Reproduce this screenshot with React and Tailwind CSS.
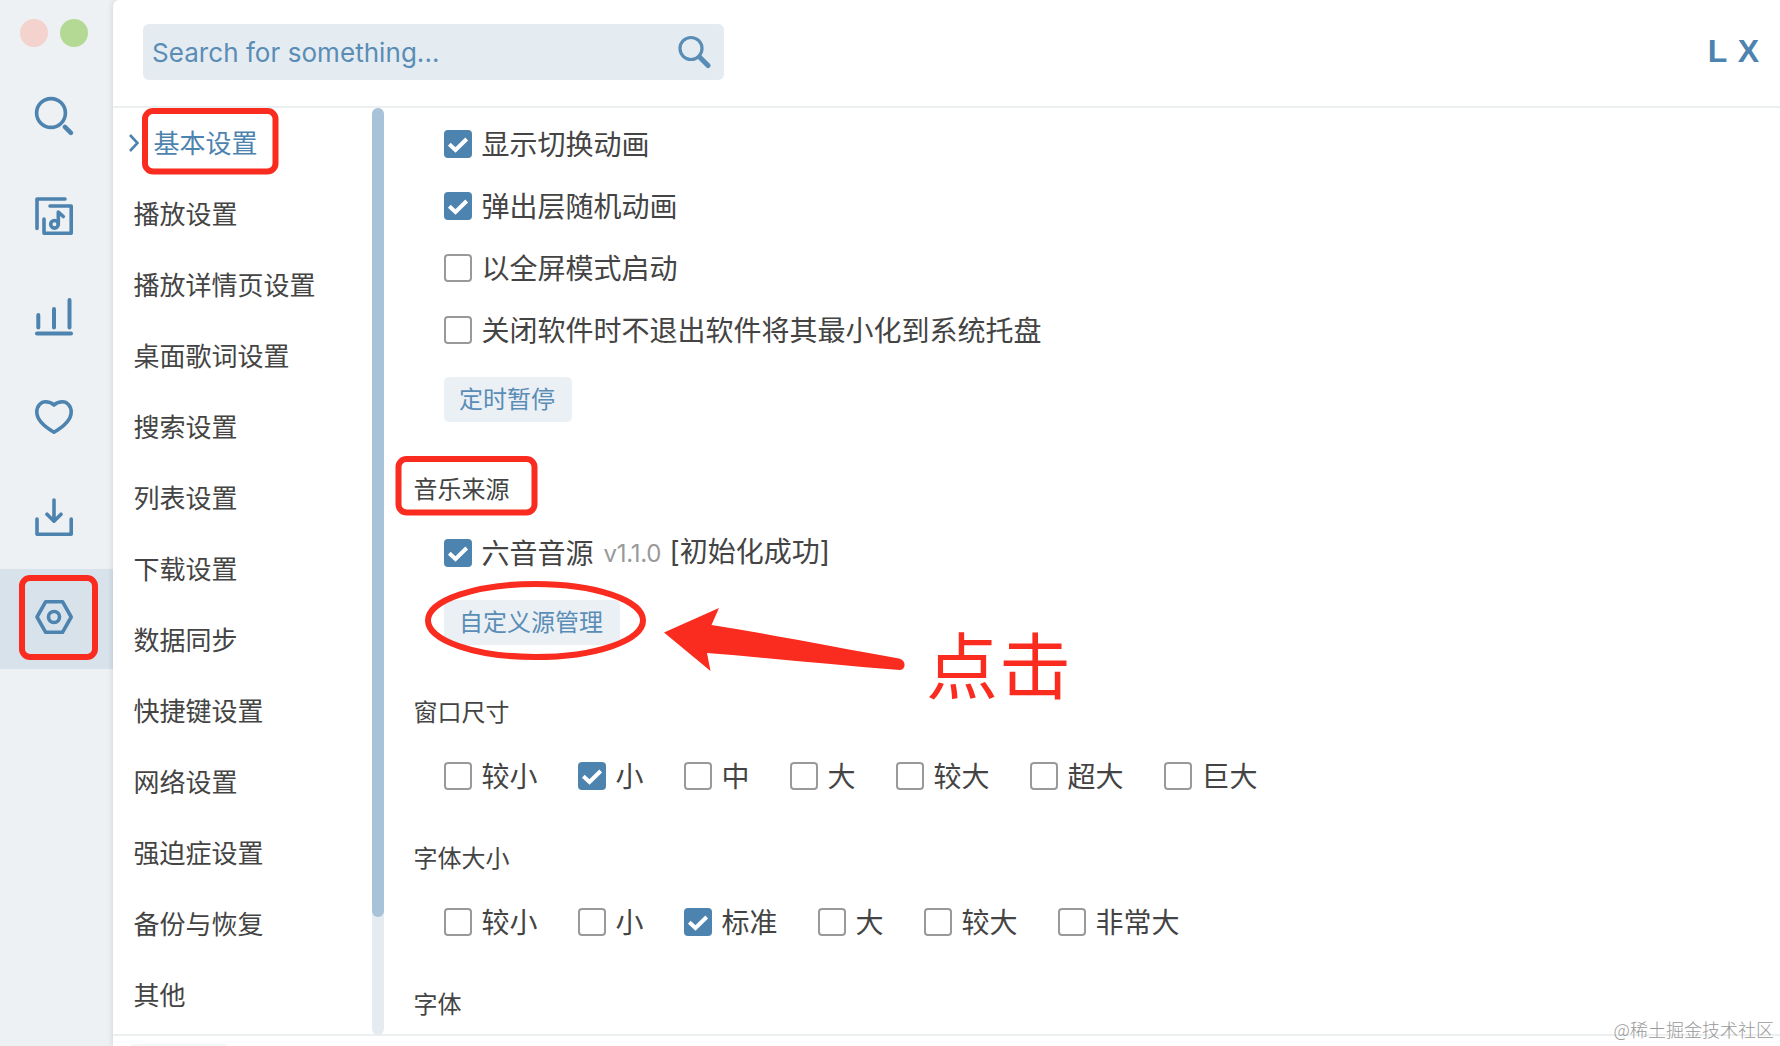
import { useState } from 'react';

const navItems = [
    "基本设置", "播放设置", "播放详情页设置", "桌面歌词设置", "搜索设置", "列表设置", "下载设置",
    "数据同步", "快捷键设置", "网络设置", "强迫症设置", "备份与恢复", "其他",
];
const windowSizes = ["较小", "小", "中", "大", "较大", "超大", "巨大"];
const fontSizes = ["较小", "小", "标准", "大", "较大", "非常大"];

// All sidebar icons share a 38x38 box
const sideIcons = [
    { id: "search", draw: <><circle cx="16" cy="16" r="14.4" /><path d="M29.900 29.900l6 6" strokeWidth="4.600" /></> },
    {
        id: "songs",
        draw: (
            <>
                <path d="M30 2H2v29.5" />
                <path d="M15 9H36.2V36.2H9V22" />
                <circle cx="19.5" cy="27.3" r="3.8" />
                <path d="M23.3 27.3V15l5 4.5" />
            </>
        ),
    },
    { id: "rank", draw: <><path d="M3.3 18v12.500M19 12v18.500M34.5 3v27.500" strokeWidth="4" /><path d="M2 36.600h34" strokeWidth="4" /></> },
    { id: "love", draw: <path d="M19 34.2C10 29 1.8 22.500 1.8 14 1.800 8 6 3.800 10.500 3.800 14 3.800 16.500 4.600 19 7 21.500 4.600 24 3.800 27.500 3.800 32 3.800 36.200 8 36.200 14 36.200 22.500 28 29 19 34.200Z" /> },
    { id: "download", draw: <><path d="M19 2v21M12 16.200l7 7 7-7" /><path d="M2 21v15.200h34.200V21" /></> },
    { id: "setting", draw: <><path d="M10.700 3.700h16.800L36.200 19l-8.700 15.300H10.700L2 19Z" /><circle cx="19" cy="19" r="5.500" /></> },
];

function Checkbox({ label, checked, onChange, children }) {
    return (
        <label className="flex h-7 cursor-pointer items-center gap-[9.5px] text-[28px] leading-7 whitespace-nowrap">
            <input type="checkbox" className="sr-only" checked={checked} onChange={onChange} />
            {checked ? (
                <span className="flex size-7 shrink-0 items-center justify-center rounded-[4px] bg-[#4d83af]">
                    <svg viewBox="0 0 28 28" className="size-7" fill="none" stroke="#fff" strokeWidth="4">
                        <path d="M5.300 14.200l6.200 5.700L22.700 9" />
                    </svg>
                </span>
            ) : (
                <span className="size-7 shrink-0 rounded-[4px] border-2 border-[#999]"></span>
            )}
            <span className="pr-[0.5px] pb-0.5">{label}</span>
            {children}
        </label>
    );
}

function Title({ children }) {
    return <h3 className="h-6 pl-[29.5px] text-[24px] leading-[22px]">{children}</h3>;
}

function Btn({ children }) {
    return (
        <button className="h-[45px] rounded-[5px] bg-[#ebf0f5] pr-[17px] pl-[15px] text-[24px] text-[#5a8db6]">
            <span className="block h-[45px] leading-[42px]">{children}</span>
        </button>
    );
}

function App() {
    const [toggles, setToggles] = useState([true, true, false, false]);
    const [source, setSource] = useState(true);
    const [size, setSize] = useState("小");
    const [font, setFont] = useState("标准");
    const labels = ["显示切换动画", "弹出层随机动画", "以全屏模式启动", "关闭软件时不退出软件将其最小化到系统托盘"];

    function toggle(index) {
        setToggles(toggles.map((t, i) => (i === index ? !t : t)));
    }

    return (
        <div className="relative flex h-[1046px] w-[1780px] overflow-hidden bg-[#edf1f4] font-['Noto_Sans_CJK_SC',sans-serif] text-[#444]">
            <aside className="w-[113px] shrink-0">
                <div className="flex h-[68px] gap-3 pt-[19px] pl-5">
                    <span className="size-7 rounded-full bg-[#f4d2cd]"></span>
                    <span className="size-7 rounded-full bg-[#b4d995]"></span>
                </div>
                {sideIcons.map((icon) => (
                    <div
                        key={icon.id}
                        className={`h-[100.200px] pt-[29px] pl-[35px] ${icon.id === "setting" ? "bg-[#d7e2eb]" : ""}`}
                    >
                        <svg viewBox="0 0 38 38" className="size-[38px] overflow-visible" fill="none" stroke="#4d83af" strokeWidth="3.600" strokeLinecap="round" strokeLinejoin="round">
                            {icon.draw}
                        </svg>
                    </div>
                ))}
            </aside>

            <div className="flex min-w-0 flex-1 flex-col rounded-tl-[6px] bg-white shadow-[0_0_6px_rgba(0,0,0,0.140)]">
                <header className="flex h-[108px] shrink-0 items-start justify-between border-b-2 border-[#eceff0] pt-6 pr-[20px] pl-[30px]">
                    <div className="flex h-14 w-[581px] items-center justify-between rounded-[6px] bg-[#e4ebf1] pr-[13px] pl-[9px] text-[#5a8db6]">
                        <span className="pt-0.5 font-['Inter',sans-serif] text-[26px] leading-none tracking-[0.05px]">Search for something...</span>
                        <svg viewBox="0 0 34 34" className="size-[34px]" fill="none" stroke="currentColor" strokeLinecap="round">
                            <circle cx="14" cy="13.500" r="11" strokeWidth="3.200" />
                            <path d="M22.500 22l8.500 8.500" strokeWidth="5" />
                        </svg>
                    </div>
                    <div className="pt-[11px] font-['Liberation_Sans',sans-serif] text-[32px] leading-8 font-bold tracking-[1px] text-[#4d83af]">L X</div>
                </header>

                <div className="flex h-[926px] shrink-0">
                    <ul className="h-full w-[259px] shrink-0 overflow-hidden">
                        {navItems.map((item, i) => (
                            <li key={item} className={`flex h-[71px] items-center text-[26px] leading-[68px] ${i === 0 ? "pl-4 text-[#4d83af]" : "pl-[20.5px]"}`}>
                                {i === 0 && (
                                    <svg viewBox="0 0 10 18" className="mr-[14.5px] mb-0.5 h-[18px] w-[10px]" fill="none" stroke="currentColor" strokeWidth="2.600">
                                        <path d="M1 1l7.500 8L1 17" />
                                    </svg>
                                )}
                                <span className="h-[71px]">{item}</span>
                            </li>
                        ))}
                    </ul>
                    <div className="z-10 h-[927px] w-3 shrink-0 rounded-full bg-[#e4ebf1]">
                        <div className="h-[809px] rounded-full bg-[#a8c3d8]"></div>
                    </div>

                    <main className="h-full min-w-0 flex-1 overflow-hidden pt-[22px]">
                        <div className="flex flex-col items-start gap-[34px] pl-[60px]">
                            {labels.map((label, i) => (
                                <Checkbox key={label} label={label} checked={toggles[i]} onChange={() => toggle(i)} />
                            ))}
                        </div>
                        <div className="pt-[33px] pl-[60px]"><Btn>定时暂停</Btn></div>

                        <div className="pt-[55px]"><Title>音乐来源</Title></div>
                        <div className="pt-[38px] pl-[60px]">
                            <Checkbox label="六音音源" checked={source} onChange={() => setSource(!source)}>
                                <span className="pt-0.5 font-['Inter',sans-serif] text-[24px] tracking-[-0.3px] text-[#999]">v1.1.0</span>
                                <span className="-ml-px pb-0.5 font-['Inter','Noto_Sans_CJK_SC',sans-serif]">[初始化成功]</span>
                            </Checkbox>
                        </div>
                        <div className="pt-[33px] pl-[60px]"><Btn>自定义源管理</Btn></div>

                        <div className="pt-[55px]"><Title>窗口尺寸</Title></div>
                        <div className="flex gap-10 pt-[38px] pl-[60px]">
                            {windowSizes.map((s) => (
                                <Checkbox key={s} label={s} checked={s === size} onChange={() => setSize(s)} />
                            ))}
                        </div>

                        <div className="pt-[56px]"><Title>字体大小</Title></div>
                        <div className="flex gap-10 pt-[38px] pl-[60px]">
                            {fontSizes.map((s) => (
                                <Checkbox key={s} label={s} checked={s === font} onChange={() => setFont(s)} />
                            ))}
                        </div>

                        <div className="pt-[56px]"><Title>字体</Title></div>
                    </main>
                </div>

                <footer className="flex-1 border-t-2 border-[#eceff0] pt-2 pl-[18px]">
                    <div className="h-1 w-[96px] bg-[#f5f7f8]"></div>
                </footer>
            </div>

            {/* red marks drawn over the window */}
            <svg viewBox="0 0 1780 1046" className="pointer-events-none absolute inset-0 h-full w-full" fill="none" stroke="#fa2b1f" strokeWidth="6">
                <rect x="145" y="111" width="130.500" height="60.500" rx="8" />
                <rect x="398.500" y="459" width="136" height="53.500" rx="8" />
                <rect x="22" y="578" width="73" height="79" rx="8" />
                <ellipse cx="535.500" cy="620.500" rx="107.500" ry="36.500" />
                <path d="M664 632.500L719 608L711.500 625C775 635 840 648 899 658.500C906 660 906.500 669.500 900 670C835 665 770 658 707 653L710.500 671Z" fill="#fa2b1f" stroke="none" />
            </svg>
            <div className="absolute top-[626px] left-[926px] text-[72px] leading-[72px] tracking-[1px] text-[#fa2b1f]">点击</div>
            <div className="absolute right-[6px] bottom-2 text-[18px] leading-[18px] font-light text-[#999]">@稀土掘金技术社区</div>
        </div>
    );
}

export default App;
